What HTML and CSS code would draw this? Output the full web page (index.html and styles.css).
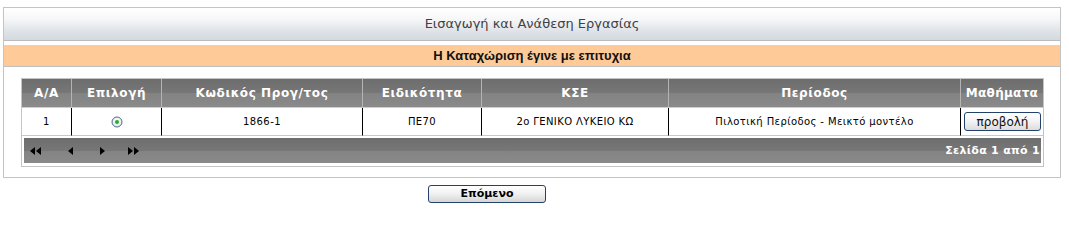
FILE: index.html
```html
<!DOCTYPE html>
<html>
<head>
<meta charset="utf-8">
<link rel="stylesheet" href="styles.css">
</head>
<body>
<div class="page">
  <div class="panel">
    <div class="panel-head">Εισαγωγή και Ανάθεση Εργασίας</div>
    <div class="notice">Η Καταχώριση έγινε με επιτυχια</div>
    <table class="grid">
      <colgroup>
        <col class="c1"><col class="c2"><col class="c3"><col class="c4"><col class="c5"><col class="c6"><col class="c7">
      </colgroup>
      <thead>
        <tr>
          <th>Α/Α</th>
          <th>Επιλογή</th>
          <th>Κωδικός Προγ/τος</th>
          <th>Ειδικότητα</th>
          <th>ΚΣΕ</th>
          <th>Περίοδος</th>
          <th class="last">Μαθήματα</th>
        </tr>
      </thead>
      <tbody>
        <tr class="row">
          <td>1</td>
          <td><svg class="radio" width="12" height="12" viewBox="0 0 12 12"><defs><radialGradient id="rg" cx="0.5" cy="0.4" r="0.6"><stop offset="0" stop-color="#ffffff"/><stop offset="1" stop-color="#dfe6ee"/></radialGradient></defs><circle cx="6" cy="6" r="5" fill="url(#rg)" stroke="#4d6b8c" stroke-width="1"/><circle cx="6" cy="6" r="2" fill="#22b022"/></svg></td>
          <td>1866-1</td>
          <td>ΠΕ70</td>
          <td>2ο ΓΕΝΙΚΟ ΛΥΚΕΙΟ ΚΩ</td>
          <td>Πιλοτική Περίοδος - Μεικτό μοντέλο</td>
          <td class="last"><button class="view">προβολή</button></td>
        </tr>
        <tr>
          <td colspan="7" class="pager-cell">
            <div class="pager">
              <div class="nav">
                <svg width="12" height="8" viewBox="0 0 12 8"><path d="M0 4 L5 0 L5 8 Z M6 4 L11 0 L11 8 Z" fill="#000"/></svg>
                <svg width="5" height="8" viewBox="0 0 5 8"><path d="M0 4 L5 0 L5 8 Z" fill="#000"/></svg>
                <svg width="5" height="8" viewBox="0 0 5 8"><path d="M5 4 L0 0 L0 8 Z" fill="#000"/></svg>
                <svg width="12" height="8" viewBox="0 0 12 8"><path d="M5 4 L0 0 L0 8 Z M11 4 L6 0 L6 8 Z" fill="#000"/></svg>
              </div>
              <div class="pageinfo">Σελίδα 1 από 1</div>
            </div>
          </td>
        </tr>
      </tbody>
    </table>
  </div>
  <div class="actions">
    <button class="next">Επόμενο</button>
  </div>
</div>
</body>
</html>
```

FILE: styles.css
```css
html, body {
  margin: 0;
  padding: 0;
  background: #ffffff;
}
.page {
  padding: 7px 8px 0 3px;
  font-family: "DejaVu Sans", Verdana, sans-serif;
}
.panel {
  border: 1px solid #c4c4c4;
  padding-bottom: 10px;
}
.panel-head {
  height: 32px;
  line-height: 32px;
  text-align: center;
  font-size: 13px;
  color: #3f4144;
  background: linear-gradient(#ffffff 0%, #f6f7f8 35%, #dde2e6 75%, #d3dade 100%);
  border-bottom: 1px solid #bcbcbc;
}
.notice {
  margin-top: 4px;
  height: 21px;
  line-height: 21px;
  text-align: center;
  font-family: "Liberation Sans", Arial, sans-serif;
  font-weight: bold;
  font-size: 13px;
  color: #111;
  background: #fecb98;
  border-bottom: 1px solid #c0c0c0;
}
.grid {
  margin: 11px 16px 0 17px;
  width: 1023px;
  table-layout: fixed;
  border-collapse: separate;
  border-spacing: 0;
  border: 1px solid #c4c4c4;
}
.c1 { width: 50px; }
.c2 { width: 90px; }
.c3 { width: 201px; }
.c4 { width: 119px; }
.c5 { width: 187px; }
.c6 { width: 292px; }
.c7 { width: 82px; }
.grid th {
  height: 28px;
  padding: 0;
  font-size: 12px;
  letter-spacing: 0.6px;
  font-weight: bold;
  color: #ffffff;
  text-align: center;
  white-space: nowrap;
  background: linear-gradient(#6d6d6d 0%, #777777 50%, #838383 50%, #8a8a8a 100%);
  border-right: 1px solid #b4b4b4;
  border-bottom: 1px solid #cfcfcf;
}
.grid th.last { border-right: none; letter-spacing: 0.3px; }
.row td {
  height: 27px;
  padding: 0;
  font-size: 10px;
  letter-spacing: 0.4px;
  color: #000;
  text-align: center;
  border-right: 1px solid #000;
  border-bottom: 1px solid #c8c8c8;
}
.row td.last { border-right: none; }
.radio { display: block; margin: 0 auto; }
.view {
  font-family: "DejaVu Sans", Verdana, sans-serif;
  font-size: 12px;
  color: #111;
  width: 77px;
  height: 19px;
  padding: 0;
  border: 1px solid #23426b;
  border-radius: 3px;
  background: linear-gradient(#ffffff 0%, #f3f3f3 50%, #dcdcdc 100%);
  display: block;
  margin-left: 3px;
}
.pager-cell {
  padding: 2px 2px 3px 2px;
}
.pager {
  height: 25px;
  display: flex;
  align-items: center;
  justify-content: space-between;
  background: linear-gradient(#6d6d6d 0%, #777777 50%, #838383 50%, #8a8a8a 100%);
}
.nav {
  display: flex;
  align-items: center;
  padding-left: 6px;
}
.nav svg { display: block; }
.nav svg:nth-child(1) { margin-right: 26px; }
.nav svg:nth-child(2) { margin-right: 27px; }
.nav svg:nth-child(3) { margin-right: 23px; }
.pageinfo {
  font-size: 11px;
  font-weight: bold;
  letter-spacing: 0.3px;
  color: #ffffff;
  padding-right: 1px;
}
.actions {
  padding: 4px 0 0 425px;
}
.next {
  font-family: "DejaVu Sans", Verdana, sans-serif;
  font-weight: bold;
  font-size: 11px;
  color: #000;
  width: 118px;
  height: 18px;
  padding: 0;
  border: 1px solid #23426b;
  border-radius: 3px;
  background: linear-gradient(#ffffff 0%, #f0f0f0 50%, #d6d6d6 100%);
}
```
